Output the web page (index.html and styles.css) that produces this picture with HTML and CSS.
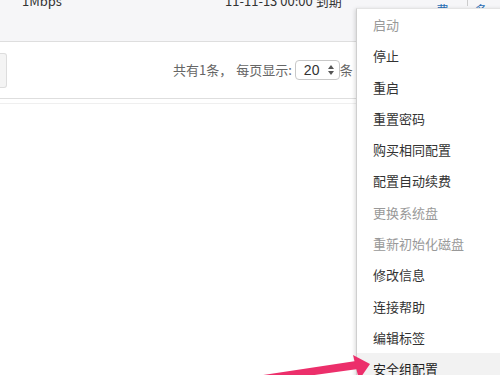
FILE: index.html
```html
<!DOCTYPE html>
<html>
<head>
<meta charset="utf-8">
<link rel="stylesheet" href="styles.css">
</head>
<body>
<div class="page">
  <div class="top">
    <div class="row">
      <span class="bw">1Mbps</span>
      <span class="exp">11-11-13 00:00 到期</span>
      <span class="links"><a>续费</a><i class="sep"></i><a>更多</a></span>
    </div>
  </div>
  <div class="toolbar">
    <div class="stub"></div>
    <div class="pager">
      <span>共有1条，</span>
      <span class="per">每页显示:</span>
      <span class="sel">20<svg class="updn" width="6" height="10" viewBox="0 0 6 10"><path d="M3 0L6 4H0Z M3 10L0 6H6Z" fill="#555"/></svg></span>
      <span>条</span>
    </div>
  </div>
  <div class="rule"></div>
</div>
<ul class="menu">
  <li class="off">启动</li>
  <li>停止</li>
  <li>重启</li>
  <li>重置密码</li>
  <li>购买相同配置</li>
  <li>配置自动续费</li>
  <li class="off">更换系统盘</li>
  <li class="off">重新初始化磁盘</li>
  <li>修改信息</li>
  <li>连接帮助</li>
  <li>编辑标签</li>
  <li class="hover">安全组配置</li>
</ul>
<svg class="arrow" width="500" height="375" viewBox="0 0 500 375">
  <polygon points="250,377 356,361 358,369 300,377" fill="#ec2f6b"/>
  <polygon points="353,355 370,364 359,380" fill="#ec2f6b"/>
</svg>
</body>
</html>
```
FILE: styles.css
```css
html, body {
  margin: 0;
  padding: 0;
  background: #fff;
  overflow: hidden;
  width: 500px;
  height: 375px;
  font-family: "Noto Sans CJK SC", "Liberation Sans", sans-serif;
}
.page {
  width: 500px;
}
.top {
  height: 41px;
  background: #f6f6f8;
  border-bottom: 1px solid #dedede;
  overflow: hidden;
}
.row {
  display: flex;
  align-items: center;
  height: 20px;
  margin-top: -10px;
  font-size: 13px;
  color: #333;
}
.bw {
  margin-left: 22px;
  width: 206px;
}
.exp {
  width: 214px;
}
.links {
  display: flex;
  align-items: center;
  gap: 6px;
  color: #2a6fb5;
}
.sep {
  width: 1px;
  height: 12px;
  background: #ccc;
}
.toolbar {
  position: relative;
  height: 56px;
  border-bottom: 1px solid #dedede;
  display: flex;
  align-items: center;
}
.stub {
  width: 6px;
  height: 33px;
  border: 1px solid #ddd;
  border-left: none;
  border-radius: 0 3px 3px 0;
  background: #f4f4f4;
}
.pager {
  display: flex;
  align-items: center;
  margin-left: 166px;
  margin-top: -1px;
  font-size: 13px;
  color: #666;
}
.per {
  margin-left: 4px;
}
.sel {
  display: inline-flex;
  align-items: center;
  justify-content: space-between;
  box-sizing: border-box;
  width: 45px;
  height: 20px;
  margin-left: 3px;
  padding: 0 5px 0 8px;
  border: 1px solid #c8c8c8;
  border-radius: 4px;
  color: #333;
  background: #fff;
  font-family: "Liberation Sans", sans-serif;
  font-size: 14px;
}
.rule {
  height: 4px;
  border-bottom: 1px solid #efefef;
}
.menu {
  position: absolute;
  left: 356px;
  top: 8px;
  width: 160px;
  margin: 0;
  padding: 0;
  list-style: none;
  background: #fff;
  border-left: 1px solid #cfcfcf;
  border-top: 1px solid #e4e4e4;
  box-shadow: -1px 1px 4px rgba(0,0,0,0.15);
}
.menu li {
  height: 31.3px;
  line-height: 31px;
  padding-left: 16px;
  font-size: 13px;
  color: #333;
}
.menu li.off {
  color: #999;
}
.menu li.hover {
  background: #f2f2f2;
  color: #222;
}
.arrow {
  position: absolute;
  left: 0;
  top: 0;
  pointer-events: none;
}
```
